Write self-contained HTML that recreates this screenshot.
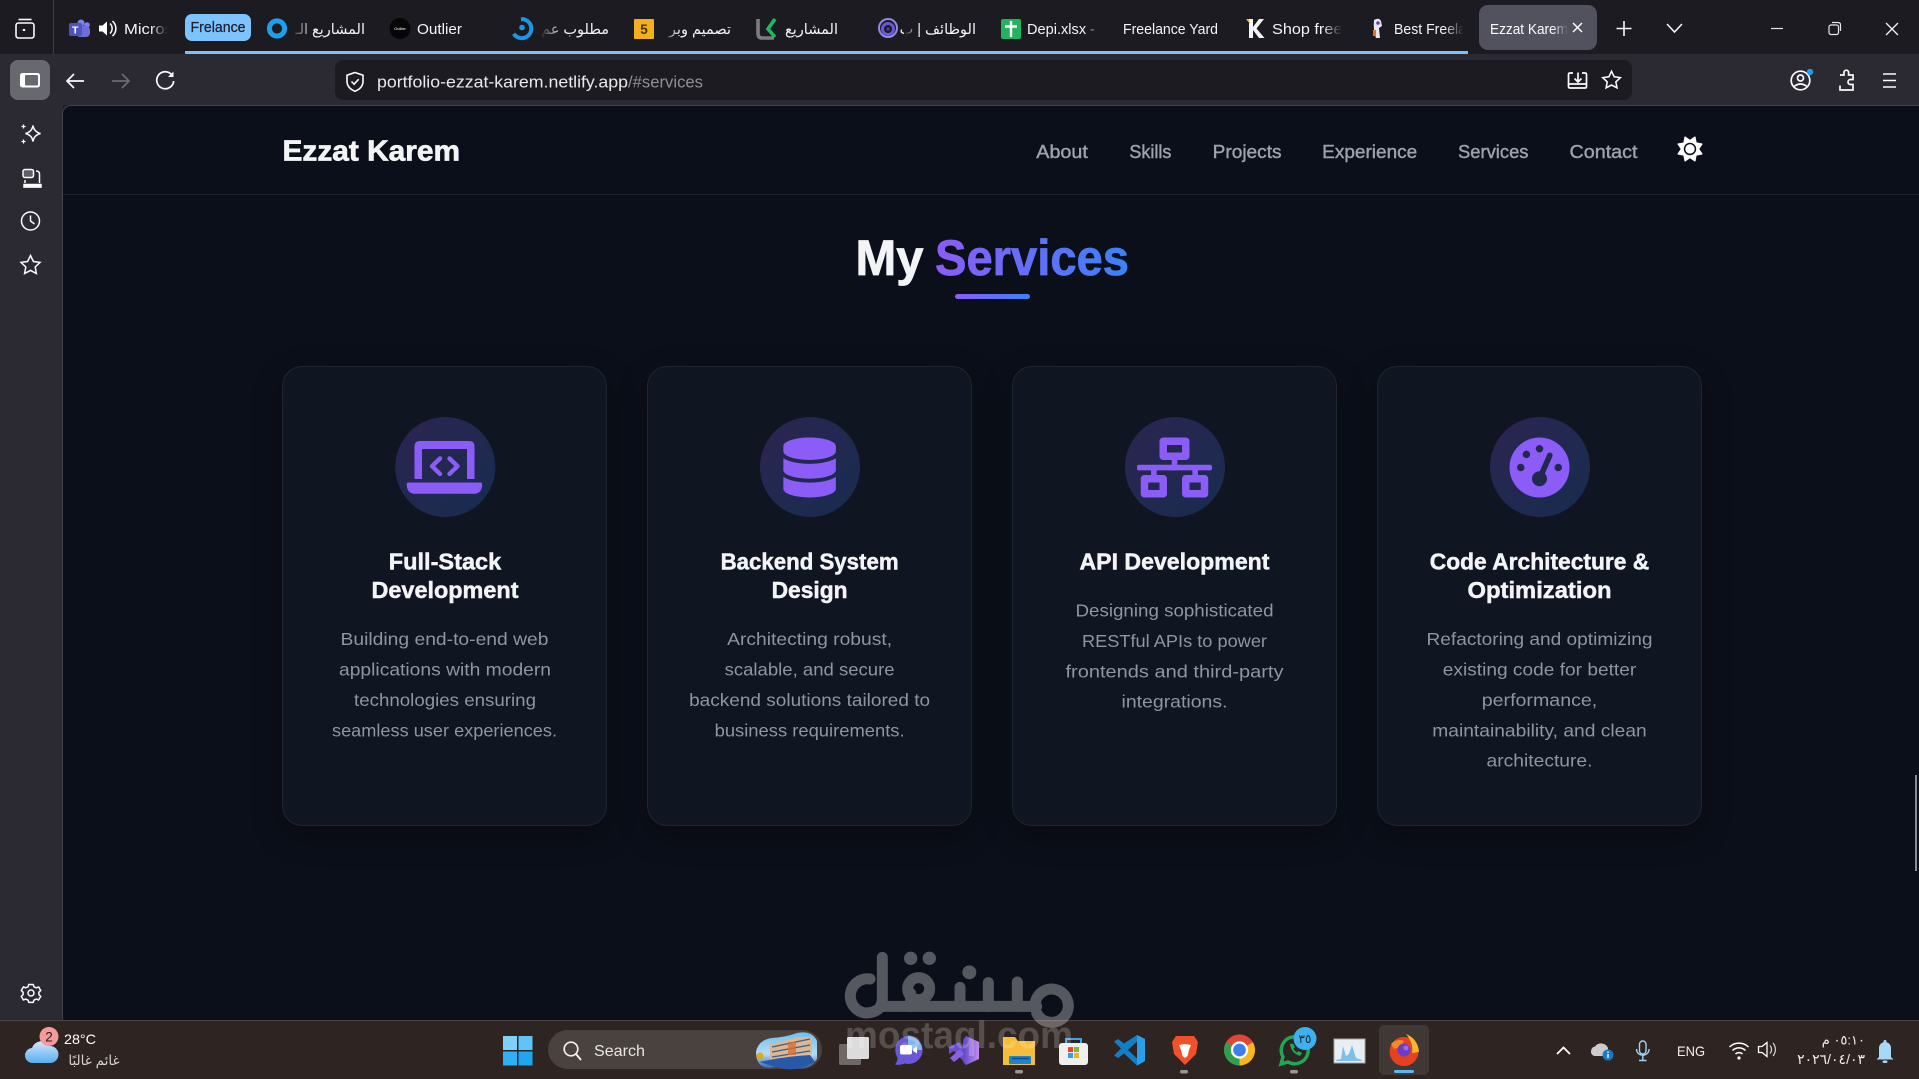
<!DOCTYPE html>
<html lang="en"><head><meta charset="utf-8"><title>Ezzat Karem</title>
<style>
html,body{margin:0;padding:0;width:1919px;height:1079px;overflow:hidden;background:#1c1b22}
.a{position:absolute}
#toolbar{left:0;top:54px;width:1919px;height:51px;background:#2b2a33}
#side{left:0;top:54px;width:63px;height:966px;background:#2b2a33}
#page{left:62px;top:105px;width:1857px;height:915px;background:#0b0f19;border-left:1px solid #42424a;border-top:1px solid #42424a;box-sizing:border-box;border-top-left-radius:9px}
#navline{left:63px;top:194px;width:1856px;height:1px;background:#1c222d}
.card{top:366px;width:324.6px;height:460px;box-sizing:border-box;background:#0f1521;border:1px solid #1e2531;border-radius:20px;box-shadow:0 10px 30px rgba(0,0,0,.3)}
#task{left:0;top:1020px;width:1919px;height:59px;background:#2e2421;border-top:1px solid #4b433f;box-sizing:border-box}
svg{position:absolute;left:0;top:0}
text{font-family:"Liberation Sans","DejaVu Sans",sans-serif}
</style></head><body>
<div class="a" id="toolbar"></div><div class="a" id="side"></div><div class="a" id="page"></div><div class="a" id="navline"></div>
<div class="a card" style="left:282px;width:325px"></div><div class="a card" style="left:647.300px"></div><div class="a card" style="left:1012.100px"></div><div class="a card" style="left:1377.100px"></div>
<div class="a" id="task"></div>
<svg width="1919" height="1079" viewBox="0 0 1919 1079" xmlns="http://www.w3.org/2000/svg">
<defs>
<linearGradient id="gt" gradientUnits="userSpaceOnUse" x1="935" y1="0" x2="1129" y2="0"><stop offset="0" stop-color="#8b5cf6"/><stop offset="1" stop-color="#3b82f6"/></linearGradient>
<linearGradient id="gu" gradientUnits="userSpaceOnUse" x1="955" y1="0" x2="1030" y2="0"><stop offset="0" stop-color="#8b5cf6"/><stop offset="1" stop-color="#3b82f6"/></linearGradient>
<linearGradient id="gc" x1="0" y1="0" x2="1" y2="1"><stop offset="0" stop-color="#2c2550"/><stop offset="1" stop-color="#172c50"/></linearGradient>
<linearGradient id="fade"><stop offset="0" stop-color="#1c1b22" stop-opacity="0"/><stop offset="1" stop-color="#1c1b22"/></linearGradient>
<linearGradient id="fadeA"><stop offset="0" stop-color="#52525e" stop-opacity="0"/><stop offset="1" stop-color="#52525e"/></linearGradient>
<linearGradient id="sky" x1="0" y1="0" x2="0" y2="1"><stop offset="0" stop-color="#6cc0ee"/><stop offset=".6" stop-color="#b8dcf0"/><stop offset="1" stop-color="#2f62b0"/></linearGradient>
<linearGradient id="cloud" x1="0" y1="0" x2="0" y2="1"><stop offset="0" stop-color="#d5e8fa"/><stop offset="1" stop-color="#57aef0"/></linearGradient>
<linearGradient id="vs" x1="0" y1="0" x2="1" y2="0"><stop offset="0" stop-color="#5e48c8"/><stop offset="1" stop-color="#c48af0"/></linearGradient>
</defs>

<!-- tab strip -->
<rect x="53" y="0" width="1" height="54" fill="#3f3e46"/>
<rect x="185" y="51" width="1283" height="3" fill="#7cc0f8"/>
<g fill="none" stroke="#fbfbfe" stroke-width="1.6">
<rect x="16" y="23" width="18" height="15" rx="2.5"/><path d="M18.5 19.5h13"/><path d="M24 29v2" stroke-width="2.4"/>
</g>
<!-- teams -->
<circle cx="81" cy="23" r="3.5" fill="#7b83eb"/><circle cx="87" cy="25" r="2.8" fill="#7b83eb"/><rect x="76" y="26" width="14" height="11" rx="4" fill="#6a70d8"/>
<rect x="69" y="23" width="13" height="13" rx="2" fill="#4e54b8"/><text x="72" y="33.5" font-size="10.5" font-weight="700" fill="#fff">T</text>
<path d="M99 25.5h3.5l4.5-4v14l-4.5-4H99z" fill="#fff"/><path d="M110 23.5a7 7 0 0 1 0 10M112.5 21a10 10 0 0 1 0 15" fill="none" stroke="#fff" stroke-width="1.5"/>
<text x="124" y="34" font-size="15" fill="#f4f4f6" textLength="49" lengthAdjust="spacingAndGlyphs">Micros</text><rect x="150" y="16" width="18" height="24" fill="url(#fade)"/><rect x="167" y="16" width="17" height="24" fill="#1c1b22"/>
<rect x="185" y="14" width="66" height="27" rx="7" fill="#7dc4ff"/>
<text x="190.5" y="32" font-size="14.5" fill="#20202b" stroke="#20202b" stroke-width=".25" textLength="55" lengthAdjust="spacingAndGlyphs">Frelance</text>
<circle cx="277" cy="28.5" r="7.6" fill="none" stroke="#1d9fe9" stroke-width="5"/>
<text x="365" y="34" font-size="14.5" fill="#f4f4f6" direction="rtl">المشاريع الـ</text><rect x="290" y="16" width="24" height="24" fill="url(#fade)" transform="rotate(180 302 28)"/>
<circle cx="400" cy="28.5" r="10.5" fill="#060608"/><text x="400" y="30" font-size="4" fill="#fff" text-anchor="middle">Outlier</text>
<text x="417" y="34" font-size="15" fill="#f4f4f6" textLength="45" lengthAdjust="spacingAndGlyphs">Outlier</text>
<path d="M526 20a9.5 9.5 0 1 1-13.5 9" fill="none" stroke="#1b96e6" stroke-width="4" transform="rotate(-30 522 29)"/><circle cx="522" cy="27.5" r="2.8" fill="#1b96e6"/>
<text x="609" y="34" font-size="14.5" fill="#f4f4f6" direction="rtl">مطلوب عم</text><rect x="540" y="16" width="22" height="24" fill="url(#fade)" transform="rotate(180 551 28)"/>
<rect x="634" y="19" width="20" height="20" rx="1" fill="#f2b01e"/><text x="644" y="34" font-size="13.5" font-weight="700" fill="#4a3408" text-anchor="middle">5</text>
<text x="731" y="34" font-size="14.5" fill="#f4f4f6" direction="rtl">تصميم وبر</text><rect x="662" y="16" width="18" height="24" fill="url(#fade)" transform="rotate(180 671 28)"/>
<path d="M758 19v14q0 5 4 5h12" fill="none" stroke="#7d7d80" stroke-width="3.6"/><path d="M775 19l-7 10 7 8" fill="none" stroke="#1fb95f" stroke-width="3.6"/>
<text x="838" y="34" font-size="14.5" fill="#f4f4f6" direction="rtl">المشاريع</text>
<circle cx="888" cy="28" r="9" fill="none" stroke="#8d8de0" stroke-width="2"/><circle cx="888" cy="29" r="5.5" fill="none" stroke="#6a58d8" stroke-width="3"/><circle cx="888" cy="29" r="1.6" fill="#4a40a8"/>
<text x="976" y="34" font-size="14.5" fill="#f4f4f6" direction="rtl">الوظائف | ب</text><rect x="904" y="16" width="14" height="24" fill="url(#fade)" transform="rotate(180 911 28)"/>
<rect x="1001" y="19" width="20" height="20" rx="2" fill="#22b35e"/><path d="M1011 21v16M1005 26.5h12" stroke="#fff" stroke-width="2.4"/>
<text x="1027" y="34" font-size="15" fill="#f4f4f6" textLength="68" lengthAdjust="spacingAndGlyphs">Depi.xlsx -</text><rect x="1085" y="16" width="14" height="24" fill="url(#fade)"/>
<text x="1123" y="34" font-size="15" fill="#f4f4f6" textLength="95" lengthAdjust="spacingAndGlyphs">Freelance Yard</text>
<path d="M1249 19h4v8l6-8h5l-7.500 9.500 8 9.500h-5.500l-6-8v8h-4z" fill="#f4f4f6"/><path d="M1246 19h3l1 5z" fill="#f5b51f"/>
<text x="1272" y="34" font-size="15" fill="#f4f4f6" textLength="74" lengthAdjust="spacingAndGlyphs">Shop freel</text><rect x="1322" y="16" width="20" height="24" fill="url(#fade)"/><rect x="1341" y="16" width="20" height="24" fill="#1c1b22"/>
<path d="M1374 20q5-3 7 1l1 5-3 2 1 10h-4q-3-8-2-18z" fill="#e8e4f0"/><rect x="1373" y="30" width="3" height="6" fill="#e8721e"/><circle cx="1378" cy="23" r="1.800" fill="#6a3fb8"/>
<text x="1394" y="34" font-size="15" fill="#f4f4f6" textLength="72" lengthAdjust="spacingAndGlyphs">Best Freela</text><rect x="1444" y="16" width="20" height="24" fill="url(#fade)"/><rect x="1463" y="16" width="12" height="24" fill="#1c1b22"/>
<rect x="1479" y="5" width="118" height="45" rx="9" fill="#52525e"/>
<text x="1490" y="34" font-size="15" fill="#fbfbfe" textLength="78" lengthAdjust="spacingAndGlyphs">Ezzat Karem</text><rect x="1552" y="16" width="16" height="24" fill="url(#fadeA)"/>
<path d="M1573 23l9 9m0-9l-9 9" stroke="#fbfbfe" stroke-width="1.5"/>
<path d="M1624 21v15M1616.500 28.500h15" stroke="#fbfbfe" stroke-width="1.6"/>
<path d="M1667 24l7.500 8 7.500-8" fill="none" stroke="#fbfbfe" stroke-width="1.5"/>
<path d="M1771 28.500h12" stroke="#e6e6ea" stroke-width="1.200"/>
<rect x="1829" y="25" width="9.500" height="9.500" rx="2" fill="none" stroke="#e6e6ea" stroke-width="1.200"/><path d="M1832 22.500h6q2.500 0 2.500 2.500v6" fill="none" stroke="#e6e6ea" stroke-width="1.200"/>
<path d="M1886 23l12 12m0-12l-12 12" stroke="#f0f0f4" stroke-width="1.300"/>

<!-- toolbar -->
<rect x="10" y="60" width="40" height="40" rx="8" fill="#686870"/>
<rect x="20" y="73" width="20" height="14.500" rx="2.500" fill="#fff"/><rect x="25" y="75" width="13" height="10.500" rx="1" fill="#686870"/>
<g fill="none" stroke="#fbfbfe" stroke-width="1.700">
<path d="M84 81H67.500M74 74l-7 7 7 7"/>
<path d="M129 81h-17M122 74l7 7-7 7" stroke="#6b6b73"/>
<path d="M171.500 74.500a8.500 8.500 0 1 0 2.200 6.500"/><path d="M173.500 71.500v5.500h-5.500z" fill="#fbfbfe" stroke="none"/>
</g>
<rect x="335" y="60" width="1297" height="40" rx="8" fill="#1c1b22"/>
<path d="M355 72.500l8 2.700v6c0 5-3.500 8.200-8 10-4.500-1.800-8-5-8-10v-6z" fill="none" stroke="#fbfbfe" stroke-width="1.600"/><path d="M351.500 81.500l2.600 2.700 4.600-5" fill="none" stroke="#fbfbfe" stroke-width="1.600"/>
<text x="377" y="87.500" font-size="17" fill="#e9e9ec" textLength="251" lengthAdjust="spacingAndGlyphs">portfolio-ezzat-karem.netlify.app</text>
<text x="628" y="87.500" font-size="17" fill="#8f8f98" textLength="75" lengthAdjust="spacingAndGlyphs">/#services</text>
<g fill="none" stroke="#fbfbfe" stroke-width="1.700">
<path d="M1573 73h-3q-1.500 0-1.500 1.500v12q0 1.500 1.500 1.500h15q1.500 0 1.500-1.500v-12q0-1.500-1.500-1.500h-3"/><path d="M1568.500 84h18.500"/><path d="M1578 72.500v9M1574.500 78.500l3.500 3.500 3.500-3.500"/>
<path transform="translate(1600.500 69) scale(.92)" d="M12 2.500l2.900 6 6.600.9-4.800 4.600 1.200 6.500L12 17.400 6.100 20.500l1.200-6.500L2.500 9.400l6.600-.9z"/>
<circle cx="1800.500" cy="80.500" r="9.300"/><circle cx="1800.500" cy="78" r="3"/><path d="M1794 86.500q6.500-5 13 0"/>
<path d="M1840 75h4v-2.500a2.300 2.300 0 0 1 4.600 0V75h4.400v4.500h-2.500a2.500 2.500 0 0 0 0 5h2.500v5.500h-13v-4.500"/>
</g>
<circle cx="1810" cy="72" r="3.200" fill="#1e9cf0"/>
<path d="M1883 74h13M1883 80.500h13M1883 87h13" stroke="#fbfbfe" stroke-width="1.600"/>

<!-- sidebar -->
<g fill="none" stroke="#fbfbfe" stroke-width="1.500">
<path d="M33 125.500q1 6.500 7.500 8-6.500 1.500-7.500 8-1-6.500-7.500-8 6.500-1.500 7.500-8z"/><path d="M23.500 124.500v4M21.500 126.500h4M23.500 139.500v4M21.500 141.500h4" stroke-width="1.200"/>
<rect x="23" y="169.500" width="10.500" height="8" rx="2" fill="#fbfbfe" fill-opacity=".25"/><path d="M36 171q3.500 0 3.500 3v9M25 180v3" /><rect x="24" y="184.500" width="17" height="2.600" fill="#fbfbfe"/>
<circle cx="30.500" cy="221" r="9"/><path d="M30.500 215.500v5.500l4 3"/>
<path transform="translate(18.500 253) scale(1)" d="M12 2.500l2.900 6 6.600.9-4.800 4.600 1.200 6.500L12 17.400 6.100 20.500l1.200-6.500L2.500 9.400l6.600-.9z"/>
<g transform="translate(0 -1)"><circle cx="31" cy="994" r="3"/><path d="M28.800 985.500h4.400l.8 2.300 2.300 1 2.300-.9 2.100 3.600-1.800 1.700v2.500l1.800 1.700-2.100 3.600-2.300-.9-2.300 1-.8 2.300h-4.400l-.8-2.300-2.300-1-2.300.9-2.100-3.600 1.800-1.700v-2.500l-1.800-1.700 2.100-3.600 2.300.9 2.300-1z"/></g>
</g>

<!-- nav -->
<text x="282.500" y="160.500" font-size="29" font-weight="700" fill="#f3f4f6" stroke="#f3f4f6" stroke-width=".7" textLength="177.500" lengthAdjust="spacingAndGlyphs">Ezzat Karem</text>
<g font-size="18" fill="#9ca3af" stroke="#9ca3af" stroke-width=".4">
<text x="1036.300" y="158" textLength="51.500" lengthAdjust="spacingAndGlyphs">About</text>
<text x="1129.400" y="158" textLength="42" lengthAdjust="spacingAndGlyphs">Skills</text>
<text x="1212.600" y="158" textLength="69" lengthAdjust="spacingAndGlyphs">Projects</text>
<text x="1322.200" y="158" textLength="95" lengthAdjust="spacingAndGlyphs">Experience</text>
<text x="1458" y="158" textLength="70.500" lengthAdjust="spacingAndGlyphs">Services</text>
<text x="1569.500" y="158" textLength="68" lengthAdjust="spacingAndGlyphs">Contact</text>
</g>
<path transform="translate(1677.500 136.500) scale(.04883)" fill="#fff" d="M256 159.100c-53.020 0-95.100 42.980-95.100 95.100S202.100 351.100 256 351.100s95.100-42.980 95.100-95.100S309 159.100 256 159.100zM509.300 347L446.100 255.100l63.150-91.010c6.332-9.125 1.104-21.740-9.826-23.720l-109-19.700l-19.700-109c-1.975-10.930-14.590-16.160-23.720-9.824L256 65.890L164.100 2.736c-9.125-6.332-21.740-1.107-23.720 9.824L121.600 121.600L12.560 141.300C1.633 143.200-3.596 155.900 2.736 164.100L65.890 256l-63.150 91.010c-6.332 9.125-1.105 21.740 9.824 23.720l109 19.700l19.700 109c1.975 10.930 14.590 16.160 23.720 9.824L256 446.100l91.010 63.150c9.127 6.334 21.750 1.107 23.720-9.822l19.700-109l109-19.700C510.400 368.800 515.600 356.100 509.300 347zM256 383.100c-70.690 0-127.100-57.310-127.100-127.100c0-70.690 57.310-127.100 127.100-127.100s127.100 57.310 127.100 127.100C383.100 326.700 326.700 383.100 256 383.100z"/>

<!-- heading -->
<text x="855.500" y="275" font-size="50" font-weight="700" fill="#f3f4f6" stroke="#f3f4f6" stroke-width=".8" textLength="68" lengthAdjust="spacingAndGlyphs">My</text>
<text x="935" y="275" font-size="50" font-weight="700" fill="url(#gt)" stroke="url(#gt)" stroke-width=".8" textLength="194" lengthAdjust="spacingAndGlyphs">Services</text>
<rect x="955" y="294" width="75" height="5" rx="2.500" fill="url(#gu)"/>

<!-- icon circles -->
<circle cx="445.300" cy="467" r="50" fill="url(#gc)"/><circle cx="810" cy="467" r="50" fill="url(#gc)"/><circle cx="1175" cy="467" r="50" fill="url(#gc)"/><circle cx="1540" cy="467" r="50" fill="url(#gc)"/>
<g fill="#8b5cf6">
<path fill-rule="evenodd" d="M420 441h49q5.500 0 5.500 5.500V479h-7.500V449h-45v30h-7.500V446.500q0-5.500 5.500-5.500z"/>
<path d="M408.500 482.500h72q1.700 0 1.700 1.700 0 9.600-9 9.600h-57.500q-9 0-9-9.600 0-1.700 1.800-1.700z"/>
<path d="M440 458.500l-8 7.700 8 7.700M449.500 458.500l8 7.700-8 7.700" fill="none" stroke="#8b5cf6" stroke-width="4.400" stroke-linejoin="round" stroke-linecap="round"/>
<path transform="translate(783.350 437.500) scale(.1172)" d="M448 73.143v45.714C448 159.143 347.667 192 224 192S0 159.143 0 118.857V73.143C0 32.857 100.333 0 224 0s224 32.857 224 73.143zM448 176v102.857C448 319.143 347.667 352 224 352S0 319.143 0 278.857V176c48.125 33.143 136.208 48.572 224 48.572S399.874 209.143 448 176zm0 160v102.857C448 479.143 347.667 512 224 512S0 479.143 0 438.857V336c48.125 33.143 136.208 48.572 224 48.572S399.874 369.143 448 336z"/>
<path transform="translate(1137 437.500) scale(.1172)" d="M640 264v-16c0-8.840-7.160-16-16-16H344v-40h72c17.670 0 32-14.330 32-32V32c0-17.670-14.330-32-32-32H224c-17.670 0-32 14.330-32 32v128c0 17.670 14.330 32 32 32h72v40H16c-8.840 0-16 7.160-16 16v16c0 8.840 7.160 16 16 16h104v40H64c-17.670 0-32 14.330-32 32v128c0 17.670 14.330 32 32 32h160c17.670 0 32-14.330 32-32V352c0-17.670-14.330-32-32-32h-56v-40h304v40h-56c-17.670 0-32 14.330-32 32v128c0 17.670 14.330 32 32 32h160c17.670 0 32-14.330 32-32V352c0-17.670-14.330-32-32-32h-56v-40h104c8.840 0 16-7.160 16-16zM256 128V64h128v64H256zm-64 320H96v-64h96v64zm352 0h-96v-64h96v64z"/>
<path transform="translate(1509.500 437.500) scale(.1172)" fill-rule="evenodd" d="M0 256a256 256 0 1 1 512 0A256 256 0 1 1 0 256zM288 96a32 32 0 1 0 -64 0 32 32 0 1 0 64 0zM256 416c35.300 0 64-28.700 64-64c0-17.400-6.900-33.100-18.100-44.600L366 161.700c5.300-12.100-.2-26.300-12.300-31.600s-26.300 .2-31.600 12.300L257.900 288c-.6 0-1.300 0-1.900 0c-35.300 0-64 28.700-64 64s28.700 64 64 64zM176 144a32 32 0 1 0 -64 0 32 32 0 1 0 64 0zM96 288a32 32 0 1 0 0-64 32 32 0 1 0 0 64zm352-32a32 32 0 1 0 -64 0 32 32 0 1 0 64 0z"/>
</g>

<!-- card titles -->
<g font-size="23.500" font-weight="700" fill="#f3f4f6" stroke="#f3f4f6" stroke-width=".5" text-anchor="middle">
<text x="445" y="569.500" textLength="112.500" lengthAdjust="spacingAndGlyphs">Full-Stack</text>
<text x="445" y="598" textLength="147" lengthAdjust="spacingAndGlyphs">Development</text>
<text x="809.600" y="569.500" textLength="178" lengthAdjust="spacingAndGlyphs">Backend System</text>
<text x="809.600" y="598" textLength="76" lengthAdjust="spacingAndGlyphs">Design</text>
<text x="1174.500" y="569.500" textLength="190" lengthAdjust="spacingAndGlyphs">API Development</text>
<text x="1539.500" y="569.500" textLength="219.500" lengthAdjust="spacingAndGlyphs">Code Architecture &amp;</text>
<text x="1539.500" y="598" textLength="144" lengthAdjust="spacingAndGlyphs">Optimization</text>
</g>
<!-- card text -->
<g font-size="17.500" fill="#90959f" text-anchor="middle">
<text x="444.500" y="645" textLength="208" lengthAdjust="spacingAndGlyphs">Building end-to-end web</text>
<text x="445" y="675.400" textLength="212" lengthAdjust="spacingAndGlyphs">applications with modern</text>
<text x="445" y="705.800" textLength="182" lengthAdjust="spacingAndGlyphs">technologies ensuring</text>
<text x="444.500" y="736.600" textLength="225" lengthAdjust="spacingAndGlyphs">seamless user experiences.</text>
<text x="809.600" y="645" textLength="165" lengthAdjust="spacingAndGlyphs">Architecting robust,</text>
<text x="809.600" y="675.400" textLength="170" lengthAdjust="spacingAndGlyphs">scalable, and secure</text>
<text x="809.600" y="705.800" textLength="241" lengthAdjust="spacingAndGlyphs">backend solutions tailored to</text>
<text x="809.600" y="736.600" textLength="190" lengthAdjust="spacingAndGlyphs">business requirements.</text>
<text x="1174.500" y="616.600" textLength="198" lengthAdjust="spacingAndGlyphs">Designing sophisticated</text>
<text x="1174.500" y="647" textLength="185" lengthAdjust="spacingAndGlyphs">RESTful APIs to power</text>
<text x="1174.500" y="677.400" textLength="218" lengthAdjust="spacingAndGlyphs">frontends and third-party</text>
<text x="1174.500" y="707.600" textLength="106" lengthAdjust="spacingAndGlyphs">integrations.</text>
<text x="1539.500" y="645" textLength="226" lengthAdjust="spacingAndGlyphs">Refactoring and optimizing</text>
<text x="1539.500" y="675.400" textLength="193.500" lengthAdjust="spacingAndGlyphs">existing code for better</text>
<text x="1539.500" y="705.800" textLength="115.500" lengthAdjust="spacingAndGlyphs">performance,</text>
<text x="1539.500" y="736.600" textLength="214.500" lengthAdjust="spacingAndGlyphs">maintainability, and clean</text>
<text x="1539.500" y="766.600" textLength="106" lengthAdjust="spacingAndGlyphs">architecture.</text>
</g>
<rect x="1915" y="775" width="2" height="96" fill="#8a8a94"/>

<!-- taskbar left -->
<path d="M33 1063a7.500 7.500 0 0 1-1-15 10 10 0 0 1 18-2 8.500 8.500 0 0 1 0 17z" fill="url(#cloud)"/>
<circle cx="49" cy="1036.500" r="9.500" fill="#f59a9a"/><text x="49" y="1041.500" font-size="13.500" fill="#2a1a1a" text-anchor="middle">2</text>
<text x="64" y="1044" font-size="14" fill="#fff" textLength="32" lengthAdjust="spacingAndGlyphs">28°C</text>
<text x="119.500" y="1065" font-size="13.500" fill="#d8d4d2" direction="rtl">غائم غالبًا</text>
<g><rect x="503" y="1036" width="14" height="14" fill="#7fd0fa"/><rect x="518.500" y="1036" width="14" height="14" fill="#5fc4f8"/><rect x="503" y="1051.500" width="14" height="14" fill="#2fb0f6"/><rect x="518.500" y="1051.500" width="14" height="14" fill="#22a5f0"/></g>
<rect x="548" y="1030" width="274" height="39" rx="19.500" fill="#4a423e"/>
<circle cx="571" cy="1049" r="6.800" fill="none" stroke="#f2f0ee" stroke-width="1.700"/><path d="M576 1054l5 6" stroke="#f2f0ee" stroke-width="1.900"/>
<text x="594" y="1056" font-size="16" fill="#e8e6e4" textLength="51" lengthAdjust="spacingAndGlyphs">Search</text>
<path d="M756 1052q2-12 16-14 14-1 25-5 15-3 20 8v18q-8 12-25 9-10-3-22 0-14 0-14-16z" fill="url(#sky)"/><path d="M770 1044l30-7h12v17l-42 6z" fill="#d8b898"/><path d="M772 1047l38-8M772 1052l38-7M772 1057l38-6" stroke="#4a5a78" stroke-width="1.200"/><rect x="788" y="1042" width="8" height="13" fill="#d87038" opacity=".8"/><path d="M760 1062q20-5 50-7l5 7q-15 9-30 7-15-3-25-7z" fill="#2858a8"/><circle cx="760" cy="1056" r="3.500" fill="#e0a820"/>
<!-- taskbar center -->
<rect x="839" y="1044" width="22" height="21" rx="1.500" fill="#6e6966"/><rect x="847" y="1037" width="22" height="22" rx="1.500" fill="#dcdcdc"/>
<path d="M908 1036a14 14 0 1 1-3 27.500q-5 2-10 1 2.500-3 2.500-7a14 14 0 0 1 10.500-21.500z" fill="#6a58d8"/><path d="M908 1036a14 14 0 0 1 14 14h-14z" fill="#7fb8e8"/><rect x="900" y="1045" width="12" height="9.500" rx="2" fill="#fff"/><path d="M913 1049l4-2.500v7l-4-2.500z" fill="#fff"/>
<path d="M949 1047l10-5 10 15-3 7-12-13-5 3z" fill="#6a4fd0"/><path d="M966 1036l13 6v17l-13 6-3-3v-22z" fill="url(#vs)"/><path d="M950 1058l10-9 4 5-10 8z" fill="#8a62e0"/>
<path d="M1003 1037h12l3 4h17v24h-32z" fill="#f5bd3a"/><rect x="1009" y="1056" width="22" height="8" rx="1" fill="#1a85d0"/><path d="M1012 1058.500h17" stroke="#0b4f88" stroke-width="1.500"/>
<rect x="1059" y="1043" width="29" height="22" rx="3" fill="#efefef"/><path d="M1066 1043v-4h15v4" fill="none" stroke="#36a8e8" stroke-width="2"/><rect x="1068" y="1047" width="5" height="5" fill="#e8402a"/><rect x="1074" y="1047" width="5" height="5" fill="#7fb82a"/><rect x="1068" y="1053" width="5" height="5" fill="#2aa4e8"/><rect x="1074" y="1053" width="5" height="5" fill="#f2b01e"/>
<path d="M1137 1035l8 4v22l-8 4.500-13-12-6 4.500-4-2.500 7-7-7-7 4-2.500 6 4.500z" fill="#127ec8"/><path d="M1137 1041.500l-9 8.500 9 8.500z" fill="#2e2421"/><path d="M1137 1035l8 4v22l-8 4.500z" fill="#2a9fe8"/>
<path d="M1176 1036h18l4 6-2 12-11 11-11-11-2-12z" fill="#f0512a"/><path d="M1179 1045l6-1 6 1-2 5-1.500 6-2.500 2-2.500-2-1.500-6z" fill="#fff"/>
<circle cx="1239.500" cy="1050" r="15.500" fill="#e24535"/><path d="M1239.500 1050l13.400-7.800a15.500 15.500 0 0 1-13.400 23.300z" fill="#f6b81f"/><path d="M1239.500 1050l0 15.500a15.500 15.500 0 0 1-13.400-23.300z" fill="#2f9e4f"/><circle cx="1239.500" cy="1050" r="7.500" fill="#3f7fe8" stroke="#fff" stroke-width="2.300"/>
<path d="M1281 1064l2-7a13.500 13.500 0 1 1 5 5z" fill="none" stroke="#1fa855" stroke-width="3.400"/><path d="M1290 1044q1 9 10 12l2-3-3.500-2-1.500 1.500q-2.500-1.500-3.500-4l1.500-1.500-2-3.500z" fill="#1fa855"/>
<circle cx="1305" cy="1038.500" r="11.500" fill="#3fb0ee"/><text x="1305" y="1043" font-size="12" fill="#1a2a3a" text-anchor="middle">٣٥</text>
<rect x="1334" y="1039" width="31" height="24" fill="#e8eef4" stroke="#a8a8a8"/><path d="M1336 1060l5-1 2-13 3 10 3-2 3-9 4 13 6 2v1h-26z" fill="#7fc0ea"/>
<rect x="1379" y="1025" width="50" height="50" rx="5" fill="#403835"/>
<circle cx="1404" cy="1051.500" r="14.500" fill="#e6421f"/><path d="M1406 1034q12 5 13 18l-7 1q2-9-6-19z" fill="#f6b72a"/><path d="M1391 1044q6-6 13-3l-3 6-7 2z" fill="#f08a24"/><circle cx="1404" cy="1050" r="6.500" fill="#6a3cc8"/><circle cx="1406" cy="1048" r="2.500" fill="#9a6cf0"/>
<rect x="1394" y="1070" width="20" height="3" rx="1.500" fill="#5cb6f5"/>
<rect x="1015" y="1070" width="8" height="3.500" rx="1.700" fill="#9a9695"/><rect x="1180" y="1070" width="8" height="3.500" rx="1.700" fill="#9a9695"/><rect x="1290" y="1070" width="8" height="3.500" rx="1.700" fill="#9a9695"/>
<!-- tray -->
<path d="M1557 1054l6.500-6.500 6.500 6.500" fill="none" stroke="#fff" stroke-width="1.800"/>
<path d="M1594 1056a5 5 0 0 1 1-9.500 7.500 7.500 0 0 1 13 1.500l-1 8z" fill="#ccc"/><circle cx="1608" cy="1055" r="5.500" fill="#1779c8"/><rect x="1607.300" y="1054" width="1.400" height="4" fill="#fff"/><rect x="1607.300" y="1051.500" width="1.400" height="1.400" fill="#fff"/>
<g fill="none" stroke="#9fd3f5" stroke-width="1.400"><rect x="1639.500" y="1041" width="6.500" height="13" rx="3.200"/><path d="M1636.500 1049a6.300 6.300 0 0 0 12.600 0M1642.800 1055.500v4.500M1639 1060.500h7.500"/></g>
<text x="1677" y="1056" font-size="14" fill="#f2f0ee" textLength="28" lengthAdjust="spacingAndGlyphs">ENG</text>
<g fill="none" stroke="#fff" stroke-width="1.500"><path d="M1729.500 1047a13.500 13.500 0 0 1 19 0M1732.500 1050.500a9.500 9.500 0 0 1 13 0M1735.500 1054a5 5 0 0 1 7 0"/></g><circle cx="1739" cy="1058" r="1.600" fill="#fff"/>
<path d="M1758.500 1046.500h3.500l5-4v14l-5-4h-3.500z" fill="none" stroke="#fff" stroke-width="1.300"/><path d="M1770 1045.500a6 6 0 0 1 0 8M1773 1043a10 10 0 0 1 0 13" fill="none" stroke="#d8d4d2" stroke-width="1.200"/>
<text x="1865" y="1044.500" font-size="13" fill="#f2f0ee" direction="rtl">٠٥:١٠ م</text>
<text x="1865" y="1064" font-size="14" fill="#f2f0ee" direction="rtl">٢٠٢٦/٠٤/٠٣</text>
<path d="M1879 1057v-9a6 6 0 0 1 12 0v9l2.500 2.500h-17z" fill="#a8d8f8"/><rect x="1882.500" y="1060.500" width="5" height="2.500" rx="1.200" fill="#a8d8f8"/><circle cx="1885" cy="1041.500" r="1.500" fill="#a8d8f8"/>

<!-- watermark -->
<g transform="translate(820 930) scale(.33333)" opacity=".3">
<g fill="none" stroke="#fff" stroke-width="33" stroke-linecap="round">
<path d="M150 147A50 50 0 0 0 135 249Q187 249 187 205V82"/>
<path d="M187 229H650"/>
<path d="M272 229V190"/>
<circle cx="296" cy="176" r="33"/>
<path d="M420 229V172M505 229V158M592 229V156"/>
<path d="M650 249A50 50 0 1 0 645 229"/>
</g>
<g fill="#fff"><circle cx="272" cy="85" r="20"/><circle cx="328" cy="85" r="20"/><circle cx="448" cy="127" r="21"/></g>
</g>
<text x="845" y="1048" font-size="38" font-weight="700" fill="#fff" fill-opacity=".2" textLength="228" lengthAdjust="spacingAndGlyphs">mostaql.com</text>
</svg>
</body></html>
